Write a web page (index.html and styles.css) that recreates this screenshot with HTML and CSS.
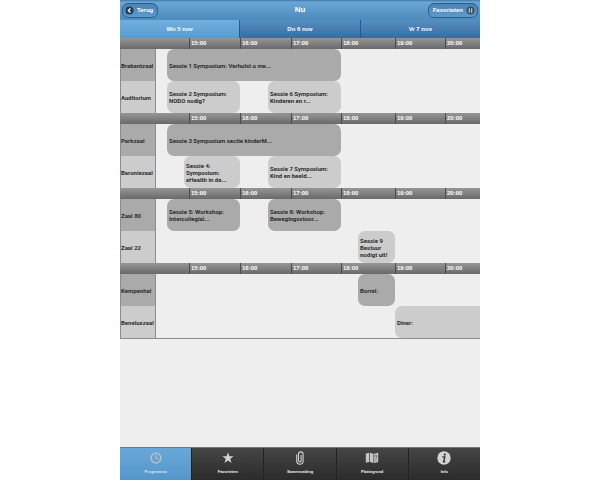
FILE: index.html
```html
<!DOCTYPE html>
<html lang="nl">
<head>
<meta charset="utf-8">
<title>Nu</title>
<link rel="stylesheet" href="styles.css">
</head>
<body>
<div class="app">
  <header class="bar">
    <div class="bar-side"><button class="pill pill-back" type="button">
      <svg class="pill-icon" viewBox="0 0 10 10" aria-hidden="true"><circle cx="5" cy="5" r="4.5" fill="#1d3d5c"/><path d="M6 2.8 3.8 5 6 7.2" fill="none" stroke="#fff" stroke-width="1.5"/></svg>
      Terug</button></div>
    <h1 class="title">Nu</h1>
    <div class="bar-side bar-end"><button class="pill pill-next" type="button">Favorieten
      <svg class="pill-icon" viewBox="0 0 10 10" aria-hidden="true"><circle cx="5" cy="5" r="4.5" fill="#3a5068"/><path d="M3.7 2.5v5M6.3 2.5v5" stroke="#c4ccd4" stroke-width="1.3"/></svg></button></div>
  </header>
  <nav class="days">
    <a class="day day-on" href="#wo">Wo 5 nov</a>
    <a class="day" href="#do">Do 6 nov</a>
    <a class="day" href="#vr">Vr 7 nov</a>
  </nav>
  <main class="schedule">
    <section>
      <div class="hours"><span class="hour h15">15:00</span><span class="hour h16">16:00</span><span class="hour h17">17:00</span><span class="hour h18">18:00</span><span class="hour h19">19:00</span><span class="hour h20">20:00</span></div>
      <div class="row dark"><h2 class="room">Brabantzaal</h2><div class="session long"><span>Sessie 1 Symposium: Verhulst u me...</span></div></div>
      <div class="row"><h2 class="room">Auditorium</h2><div class="session first"><span>Sessie 2 Symposium: NODO nodig?</span></div><div class="session second"><span>Sessie 6 Symposium: Kinderen en r...</span></div></div>
    </section>
    <section>
      <div class="hours"><span class="hour h15">15:00</span><span class="hour h16">16:00</span><span class="hour h17">17:00</span><span class="hour h18">18:00</span><span class="hour h19">19:00</span><span class="hour h20">20:00</span></div>
      <div class="row dark"><h2 class="room">Parkzaal</h2><div class="session long"><span>Sessie 3 Symposium sectie kinderM...</span></div></div>
      <div class="row"><h2 class="room">Baroniezaal</h2><div class="session short"><span>Sessie 4: Symposium: eHealth in de...</span></div><div class="session second"><span>Sessie 7 Symposium: Kind en beeld...</span></div></div>
    </section>
    <section>
      <div class="hours"><span class="hour h15">15:00</span><span class="hour h16">16:00</span><span class="hour h17">17:00</span><span class="hour h18">18:00</span><span class="hour h19">19:00</span><span class="hour h20">20:00</span></div>
      <div class="row dark"><h2 class="room">Zaal 80</h2><div class="session first"><span>Sessie 5: Workshop: Intercollegial...</span></div><div class="session second"><span>Sessie 8: Workshop: Bewegingsstoor...</span></div></div>
      <div class="row"><h2 class="room">Zaal 22</h2><div class="session evening"><span>Sessie 9 Bestuur nodigt uit!</span></div></div>
    </section>
    <section>
      <div class="hours"><span class="hour h15">15:00</span><span class="hour h16">16:00</span><span class="hour h17">17:00</span><span class="hour h18">18:00</span><span class="hour h19">19:00</span><span class="hour h20">20:00</span></div>
      <div class="row dark"><h2 class="room">Kempenhal</h2><div class="session evening"><span>Borrel:</span></div></div>
      <div class="row"><h2 class="room">Beneluxzaal</h2><div class="session late"><span>Diner:</span></div></div>
    </section>
  </main>
  <nav class="tabs">
    <a class="tab tab-on" href="#programma"><svg class="tab-icon" viewBox="0 0 14 14" aria-hidden="true"><circle cx="7" cy="7" r="5" fill="none" stroke="#b9bec3" stroke-width="1.6"/><path d="M7 3.8V7l2.4 1.4" fill="none" stroke="#b9bec3" stroke-width="1.2"/></svg>Programma</a>
    <a class="tab" href="#favorieten"><svg class="tab-icon" viewBox="0 0 14 14" aria-hidden="true"><path d="m7 1.2 1.4 4h4.3L9.300 7.800l1.200 4.200L7 9.500 3.500 12l1.200-4.200L1.300 5.200h4.300z" fill="#d2d2d2"/></svg>Favorieten</a>
    <a class="tab" href="#samenvatting"><svg class="tab-icon" viewBox="0 0 14 14" aria-hidden="true"><path d="M3.700 3.500v6.500a3.200 3.200 0 0 0 6.400 0V3.200a2.300 2.300 0 0 0-4.600 0v6.500a1.300 1.300 0 0 0 2.600 0V4" fill="none" stroke="#d2d2d2" stroke-width="1.100"/></svg>Samenvatting</a>
    <a class="tab" href="#plattegrond"><svg class="tab-icon" viewBox="0 0 14 14" aria-hidden="true"><path d="m.8 2.500 3.400-.8v9.200l-3.400.9zM4.900 1.700l3.600 1.100V12l-3.600-1.100zM9.200 2.800l4-1v9.100l-4 1.100z" fill="#c4c4c4"/><path d="M10 5.500c.4-1.500 2-1.300 2 0 0 .8-1 .9-1 2M11 8.600v1" fill="none" stroke="#444" stroke-width=".8"/></svg>Plattegrond</a>
    <a class="tab" href="#info"><svg class="tab-icon" viewBox="0 0 14 14" aria-hidden="true"><circle cx="7" cy="7" r="6.700" fill="#d4d4d4"/><circle cx="7.800" cy="3.600" r="1.100" fill="#303030"/><path d="M5.300 5.900h2.500L6.600 10.800h1.600" fill="none" stroke="#303030" stroke-width="1.400"/></svg>Info</a>
  </nav>
</div>
</body>
</html>
```
FILE: styles.css
```css
* { box-sizing: border-box; }
body {
  margin: 0;
  background: #fff;
  font: bold 6px/7px "Liberation Sans", Arial, sans-serif;
  color: #2c2c2c;
}
.app {
  display: flex;
  flex-direction: column;
  width: 60%;
  min-height: 100vh;
  margin: 0 auto;
  background: #eee;
}
.bar {
  display: flex;
  align-items: center;
  height: 20px;
  padding: 0 2px;
  background: linear-gradient(#3f78a8, #6aa5d6 2px, #4d8abd);
  color: #fff;
}
.bar-side { flex: 1; display: flex; }
.bar-end { justify-content: flex-end; }
.title { margin: 0; font-size: 8px; line-height: 10px; }
.pill {
  display: flex;
  align-items: center;
  gap: 3px;
  height: 15px;
  border: 1px solid #2b5f91;
  border-radius: 6px;
  background: linear-gradient(#4d83b4, #5e9acb);
  color: #fff;
  font: inherit;
}
.pill-back { padding: 0 4px 0 2px; }
.pill-next { padding: 0 2px 0 4px; }
.pill-icon { width: 9px; height: 9px; }
.days { display: flex; height: 18px; }
.day {
  flex: 1;
  display: flex;
  align-items: center;
  justify-content: center;
  border-left: 1px solid #265a89;
  background: linear-gradient(#578fc2, #386ca0);
  color: #fff;
  text-decoration: none;
}
.day-on { border-left: 0; background: linear-gradient(#70b0e0, #5a9bce); }
.schedule { border-bottom: 1px solid #8c8c8c; }
.hours, .row {
  display: grid;
  grid-template-columns:
    minmax(0, 36fr) minmax(0, 11fr) minmax(0, 17fr) minmax(0, 5fr)
    minmax(0, 51fr) minmax(0, 28fr) minmax(0, 23fr) minmax(0, 50fr)
    minmax(0, 17fr) minmax(0, 37fr) minmax(0, 50fr) minmax(0, 35fr);
}
.hours {
  height: 11px;
  background: linear-gradient(#969696, #696969);
  color: #fff;
}
.hour { grid-row: 1; padding-left: 1px; border-left: 1px solid #4c4c4c; line-height: 11px; }
.h15 { grid-column: 5; }
.h16 { grid-column: 6 / 8; }
.h17 { grid-column: 8; }
.h18 { grid-column: 9 / 11; }
.h19 { grid-column: 11; }
.h20 { grid-column: 12; }
.row { height: 32px; }
.room {
  display: flex;
  align-items: center;
  margin: 0;
  border: solid #8c8c8c;
  border-width: 0 1px;
  background: #ccc;
  font-size: inherit;
  white-space: nowrap;
}
.room, .session { font-family: Roboto, "Liberation Sans", sans-serif; }
.session {
  display: flex;
  align-items: center;
  grid-row: 1;
  padding: 0 2px;
  border-radius: 7px;
  background: #ccc;
}
.dark .room, .dark .session { background: #aaa; }
.long { grid-column: 3 / 9; }
.first { grid-column: 3 / 6; }
.short { grid-column: 4 / 6; }
.second { grid-column: 7 / 9; }
.evening { grid-column: 10; }
.late { grid-column: 11 / 13; border-radius: 7px 0 0 7px; }
.tabs { display: flex; height: 33px; margin-top: auto; border-top: 1px solid #777; }
.tab {
  flex: 1;
  display: flex;
  flex-direction: column;
  align-items: center;
  gap: 4px;
  padding-top: 3px;
  border-left: 1px solid #222;
  background: linear-gradient(#454545, #2b2b2b);
  color: #f2f2f2;
  font-size: 4px;
  line-height: 6px;
  text-decoration: none;
}
.tab-on { border-left: 0; background: linear-gradient(#68a8d9, #5596c9); color: #d9e3ec; }
.tab-icon { width: 14px; height: 14px; }
```
